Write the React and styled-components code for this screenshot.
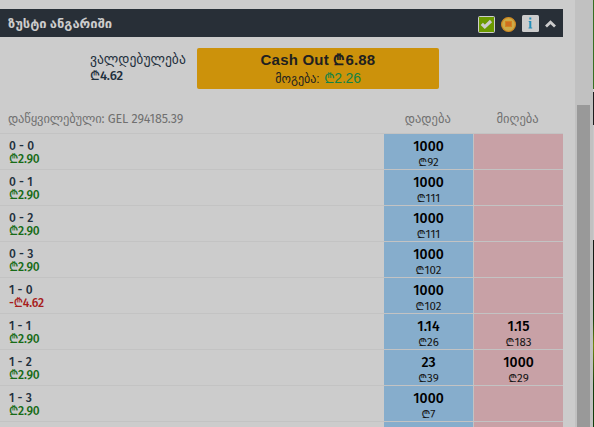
import React from "react";
import styled, { createGlobalStyle } from "styled-components";

const rows = [
  { score: "0 - 0", profit: "₾2.90", back: ["1000", "₾92"] },
  { score: "0 - 1", profit: "₾2.90", back: ["1000", "₾111"] },
  { score: "0 - 2", profit: "₾2.90", back: ["1000", "₾111"] },
  { score: "0 - 3", profit: "₾2.90", back: ["1000", "₾102"] },
  { score: "1 - 0", profit: "-₾4.62", loss: true, back: ["1000", "₾102"] },
  {
    score: "1 - 1",
    profit: "₾2.90",
    back: ["1.14", "₾26"],
    lay: ["1.15", "₾183"]
  },
  {
    score: "1 - 2",
    profit: "₾2.90",
    back: ["23", "₾39"],
    lay: ["1000", "₾29"]
  },
  { score: "1 - 3", profit: "₾2.90", back: ["1000", "₾7"] },
  { score: "", profit: "", back: ["", ""] }
];

const Price = ({ side, value }) => (
  <PriceCell $side={side}>
    {value && (
      <>
        <Odds>{value[0]}</Odds>
        <Stake>{value[1]}</Stake>
      </>
    )}
  </PriceCell>
);

const App = () => (
  <>
    <GlobalStyle />
    <Page>
      <Market>
        <Header>
          <Title>ზუსტი ანგარიში</Title>
          <Icons>
            <svg width="17" height="17" viewBox="0 0 17 17">
              <rect x=".5" y=".5" width="16" height="16" rx="1" fill="#6c9a00" stroke="#ccc" />
              <path d="M3.8 7.8l3 3L13 5" fill="none" stroke="#ccc" strokeWidth="3.2" />
            </svg>
            <svg width="15" height="15" viewBox="0 0 15 15">
              <circle cx="7.5" cy="7.5" r="6.9" fill="#ccab48" stroke="#cf8820" strokeWidth="1.2" />
              <rect x="4.5" y="4.5" width="6" height="5" fill="#cf6f1f" stroke="#d38420" />
            </svg>
            <InfoIcon width="17" height="17" viewBox="0 0 17 17">
              <rect width="17" height="17" rx="1.5" fill="#ccc" />
              <path d="M7.3 2.6h2v2h-2zM6.7 6h2.6v6.5h.9v1.1H6.5v-1.1h.8V7.1h-.6z" fill="#258eb8" />
            </InfoIcon>
            <svg width="11" height="8" viewBox="0 0 11 8">
              <path d="M1 6.6l4.5-4.3L10 6.6" fill="none" stroke="#ccc" strokeWidth="2.8" />
            </svg>
          </Icons>
        </Header>
        <Summary>
          <Liability>
            <LiabilityLabel>ვალდებულება</LiabilityLabel>
            <LiabilityValue>₾4.62</LiabilityValue>
          </Liability>
          <CashOut>
            <CashTitle>Cash Out ₾6.88</CashTitle>
            <CashProfit>
              <CashLabel>მოგება:</CashLabel> <b>₾2.26</b>
            </CashProfit>
          </CashOut>
        </Summary>
        <Columns>
          <Matched>დაწყვილებული: GEL 294185.39</Matched>
          <Column>დადება</Column>
          <Column>მიღება</Column>
        </Columns>
        {rows.map((row, index) => (
          <Row key={index}>
            <Runner>
              <Score>{row.score}</Score>
              <Profit $loss={row.loss}>{row.profit}</Profit>
            </Runner>
            <Price side="back" value={row.back} />
            <Price side="lay" value={row.lay} />
          </Row>
        ))}
      </Market>
      <Scrollbar>
        <Thumb />
      </Scrollbar>
      <Edge />
    </Page>
  </>
);

const GlobalStyle = createGlobalStyle`
  * {
    box-sizing: border-box;
  }
  body {
    margin: 0;
    overflow: hidden;
    background: #ccc;
    font-family: "Fira Sans", "Noto Sans", "DejaVu Sans", sans-serif;
  }
`;

const Page = styled.div`
  display: flex;
  width: 594px;
  height: 427px;
  overflow: hidden;
  white-space: nowrap;
`;

const Market = styled.div`
  width: 563px;
  margin-right: 12px;
  padding-top: 9px;
`;

const Header = styled.div`
  display: flex;
  justify-content: space-between;
  height: 28px;
  padding: 0 7px 0 8px;
  background: #282f37;
`;

const Title = styled.div`
  padding-top: 1px;
  color: #ccc;
  font-size: 13px;
  font-weight: 700;
  line-height: 28px;
`;

const Icons = styled.div`
  display: flex;
  align-items: center;
  gap: 6px;
  padding-top: 2px;
`;

const InfoIcon = styled.svg`
  margin-bottom: 2px;
`;

const Summary = styled.div`
  display: flex;
  height: 69px;
  padding: 11px 0 0 90px;
`;

const Liability = styled.div`
  width: 107px;
  padding-top: 3px;
  color: #1f303d;
`;

const LiabilityLabel = styled.div`
  font-size: 13.6px;
  line-height: 17px;
`;

const LiabilityValue = styled.div`
  font-size: 13px;
  font-weight: 500;
  line-height: 16px;
  letter-spacing: -0.2px;
`;

const CashOut = styled.div`
  width: 242px;
  height: 41px;
  padding-top: 3px;
  border-radius: 2px;
  background: #cc920b;
  color: #202020;
  font-family: "Liberation Sans", "DejaVu Sans", sans-serif;
  text-align: center;
`;

const CashTitle = styled.div`
  font-size: 15px;
  font-weight: 700;
  line-height: 18px;
  letter-spacing: 0.2px;
`;

const CashProfit = styled.div`
  font-size: 14px;
  line-height: 18px;
  b {
    color: #138246;
    font-weight: 400;
    letter-spacing: -0.2px;
  }
`;

const CashLabel = styled.span`
  font-size: 12px;
`;

const Columns = styled.div`
  display: flex;
  height: 27px;
  color: #707070;
  font-size: 12.5px;
  line-height: 25px;
`;

const Matched = styled.div`
  width: 384px;
  padding-left: 8px;
  letter-spacing: -0.1px;
`;

const Column = styled.div`
  width: 89px;
  margin-right: 1px;
  text-align: center;
`;

const Row = styled.div`
  display: flex;
  height: 36px;
  border-top: 1px solid #c3c3c3;
`;

const Runner = styled.div`
  width: 384px;
  padding: 5px 0 0 9px;
`;

const Score = styled.div`
  color: #1f303d;
  font-size: 12px;
  font-weight: 500;
  line-height: 14px;
  letter-spacing: 0.1px;
`;

const Profit = styled.div`
  margin-top: -1px;
  color: ${props => (props.$loss ? "#a71d1d" : "#176b17")};
  font-size: 12px;
  font-weight: 500;
  line-height: 14px;
  letter-spacing: -0.2px;
`;

const PriceCell = styled.div`
  width: ${props => (props.$side === "back" ? 90 : 89)}px;
  padding-top: 5px;
  border-right: ${props => (props.$side === "back" ? "1px solid #c3c3c3" : 0)};
  background: ${props => (props.$side === "back" ? "#86adcc" : "#c8a1a6")};
  text-align: center;
`;

const Odds = styled.div`
  color: #000;
  font-size: 14px;
  font-weight: 500;
  line-height: 16px;
`;

const Stake = styled.div`
  color: #151515;
  font-size: 11.5px;
  line-height: 15px;
`;

const Scrollbar = styled.div`
  width: 18px;
  padding: 105px 3px 0 2px;
  background: #c1c1c1;
`;

const Thumb = styled.div`
  height: 322px;
  background: #999;
`;

const Edge = styled.div`
  width: 1px;
  background: linear-gradient(
    #376f22 0 89px,
    #ccc 89px 92px,
    #1d1d1d 92px 125px,
    #c8c8c8 125px 240px,
    #151b15 240px 270px,
    #17400e 320px,
    #6f8a10 345px,
    #123d0c 385px,
    #123d0c 427px
  );
`;

export default App;
